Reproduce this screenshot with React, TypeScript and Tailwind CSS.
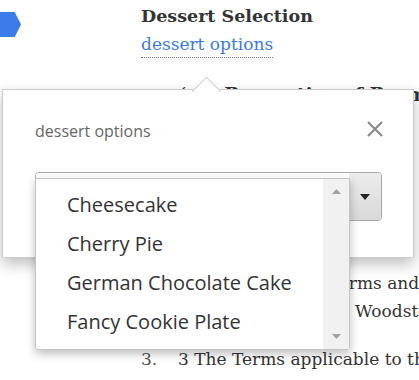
import React from 'react';

const serif = { fontFamily: '"DejaVu Serif", Georgia, serif' };
const sans = { fontFamily: '"Open Sans", Lato, sans-serif' };

const desserts = ['Cheesecake', 'Cherry Pie', 'German Chocolate Cake', 'Fancy Cookie Plate'];

const App = () => {
  return (
    <div className="relative w-[419px] h-[380px] overflow-hidden bg-white">
      {/* blue section tag */}
      <div
        className="absolute left-0 top-[12px] w-[21px] h-[25px] bg-[#3b7bea]"
        style={{ clipPath: 'polygon(0 0, 70% 0, 100% 50%, 70% 100%, 0 100%)' }}
      />

      {/* document behind the popover */}
      <div className="pl-[141px] pt-[4px] text-[#333] whitespace-nowrap" style={serif}>
        <h2 className="text-[17.5px] font-bold leading-[24px]">Dessert Selection</h2>
        <a className="inline-block mt-[5px] text-[17px] leading-[22px] text-[#3b7be0] border-b border-dotted border-[#777] pb-[2px]">
          dessert options
        </a>
        <div className="mt-[24px] ml-[38px] text-[19px] font-bold leading-[24px]">
          <span className="font-normal">(c)</span>2 Properties of Payment
        </div>
        <div className="mt-[163px] flex flex-col text-[17px] leading-[28px]">
          <div className="pl-[88px]">2. &nbsp;2 These Terms and Conditions</div>
          <div className="pl-[214px]">Woodstock Ltd</div>
          <div className="mt-[20px] flex">
            <span className="w-[37px] shrink-0 text-[#555]">3.</span>
            <span>3 The Terms applicable to the</span>
          </div>
          <div className="pl-[37px]">purchase and supply</div>
        </div>
      </div>

      {/* popover */}
      <div className="absolute left-[2px] top-[89px] w-[412px] h-[169px] bg-white border border-[#ccc] shadow-[0_6px_14px_rgba(0,0,0,0.25)]" style={sans}>
        <div className="absolute left-[193px] top-[-9px] w-[21px] h-[21px] rotate-45 bg-white border-l border-t border-[#ccc]" />
        <div className="relative flex items-center justify-between pl-[32px] pr-[29px] pt-[29px]">
          <span className="text-[16px] text-[#666]">dessert options</span>
          <svg width="18" height="18" viewBox="0 0 18 18" className="mt-[-4px]">
            <path d="M2 2L16 16M16 2L2 16" stroke="#8a8a8a" strokeWidth="2.2" />
          </svg>
        </div>
        <div className="relative mt-[29px] ml-[32px] w-[347px] h-[49px] flex rounded-[4px] border border-[#aaa] overflow-hidden">
          <div className="flex-1 bg-white" />
          <div className="w-[32px] flex items-center justify-center bg-gradient-to-b from-[#ececec] to-[#d9d9d9]">
            <svg width="10" height="6" viewBox="0 0 10 6">
              <path d="M0 0H10L5 6Z" fill="#222" />
            </svg>
          </div>
        </div>
      </div>

      {/* open option list */}
      <div className="absolute left-[35px] top-[178px] w-[315px] h-[172px] flex bg-white border border-[#c4c4c4] rounded-b-[3px] shadow-[0_4px_10px_rgba(0,0,0,0.25)]" style={sans}>
        <ul className="flex-1 pt-[6px]">
          {desserts.map((d) => (
            <li key={d} className="h-[39px] flex items-center pl-[31px] text-[20px] text-[#333]">
              {d}
            </li>
          ))}
        </ul>
        <div className="w-[26px] flex flex-col items-center justify-between bg-[#f1f1f1] py-[10px]">
          <svg width="9" height="5" viewBox="0 0 9 5">
            <path d="M0 5H9L4.5 0Z" fill="#a3a3a3" />
          </svg>
          <svg width="9" height="5" viewBox="0 0 9 5">
            <path d="M0 0H9L4.5 5Z" fill="#a3a3a3" />
          </svg>
        </div>
      </div>
    </div>
  );
};

export default App;
